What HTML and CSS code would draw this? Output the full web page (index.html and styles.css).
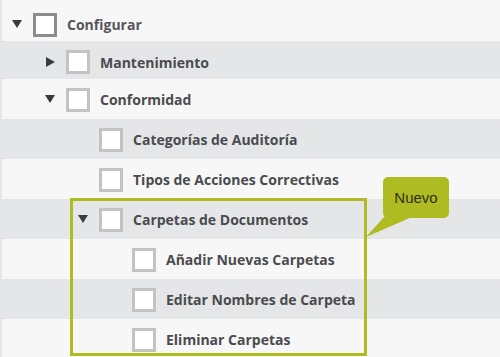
FILE: index.html
```html
<!DOCTYPE html>
<html lang="es">
<head>
    <meta charset="UTF-8">
    <title>Configurar</title>
    <link rel="stylesheet" href="styles.css">
</head>
<body>
    <ul class="tree">
        <li class="row light first">
            <span class="caret down"></span>
            <span class="check top"></span>
            <span class="label top">Configurar</span>
        </li>
        <li class="row grey second lvl-1">
            <span class="caret right"></span>
            <span class="check"></span>
            <span class="label">Mantenimiento</span>
        </li>
        <li class="row light lvl-1">
            <span class="caret down"></span>
            <span class="check"></span>
            <span class="label">Conformidad</span>
        </li>
        <li class="row grey lvl-2">
            <span class="caret none"></span>
            <span class="check"></span>
            <span class="label">Categorías de Auditoría</span>
        </li>
        <li class="row light lvl-2">
            <span class="caret none"></span>
            <span class="check"></span>
            <span class="label">Tipos de Acciones Correctivas</span>
        </li>
        <li class="group">
            <ul>
                <li class="row grey lvl-2">
                    <span class="caret down"></span>
                    <span class="check"></span>
                    <span class="label">Carpetas de Documentos</span>
                </li>
                <li class="row light lvl-3">
                    <span class="caret none"></span>
                    <span class="check"></span>
                    <span class="label">Añadir Nuevas Carpetas</span>
                </li>
                <li class="row grey lvl-3">
                    <span class="caret none"></span>
                    <span class="check"></span>
                    <span class="label">Editar Nombres de Carpeta</span>
                </li>
                <li class="row light lvl-3">
                    <span class="caret none"></span>
                    <span class="check"></span>
                    <span class="label">Eliminar Carpetas</span>
                </li>
            </ul>
            <div class="highlight"></div>
            <div class="callout">
                <span>Nuevo</span>
                <svg class="tail" width="50" height="22" viewBox="0 0 50 22">
                    <polygon points="18,0 46,0 0,20" fill="#afbc21"/>
                </svg>
            </div>
        </li>
    </ul>
</body>
</html>
```

FILE: styles.css
```css
* {
    margin: 0;
    padding: 0;
    box-sizing: border-box;
}

body {
    font-family: "Open Sans", "Liberation Sans", sans-serif;
    background: #e5e6e8;
    width: 500px;
    height: 357px;
    overflow: hidden;
}

.tree,
.tree ul {
    list-style: none;
}

.row {
    display: flex;
    align-items: center;
    height: 40px;
    padding-left: 12px;
    padding-top: 1px;
}

.row.light {
    background: #f7f7f7;
    margin-left: 2px;
    padding-left: 10px;
}

.row.grey {
    background: #e5e6e8;
}

.row.first {
    height: 41px;
    padding-top: 8px;
}

.row.second {
    height: 38px;
    padding-top: 4px;
}

.lvl-1 { padding-left: 45px; }
.lvl-2 { padding-left: 78px; }
.lvl-3 { padding-left: 111px; }

.row.light.lvl-1 { padding-left: 43px; }
.row.light.lvl-2 { padding-left: 76px; }
.row.light.lvl-3 { padding-left: 109px; }

.caret {
    width: 10px;
    height: 10px;
    margin-right: 11px;
    position: relative;
}

.caret.down::before,
.caret.right::before {
    content: "";
    position: absolute;
    border-style: solid;
}

.caret.down::before {
    top: 0;
    left: 0;
    border-width: 8px 5px 0 5px;
    border-color: #3a3b3d transparent transparent transparent;
}

.caret.right::before {
    top: 0;
    left: 1px;
    border-width: 5px 0 5px 9px;
    border-color: transparent transparent transparent #3a3b3d;
}

.check {
    width: 24px;
    height: 24px;
    border: 3px solid #c3c3c5;
    background: #fff;
    margin-right: 10px;
    flex-shrink: 0;
}

.check.top {
    border-color: #8d8d8f;
}

.label {
    font-size: 14px;
    font-weight: 700;
    color: #4a4b4e;
    white-space: nowrap;
}

.label.top {
    color: #555659;
}

.group {
    position: relative;
}

.highlight {
    position: absolute;
    left: 70px;
    top: -1px;
    width: 297px;
    height: 158px;
    border: 3px solid #afbc21;
}

.callout {
    position: absolute;
    left: 383px;
    top: -22px;
    width: 66px;
    height: 41px;
    background: #afbc21;
    border-radius: 5px;
    display: flex;
    align-items: center;
    justify-content: center;
}

.callout span {
    font-family: "Liberation Sans", Arial, sans-serif;
    font-size: 15px;
    color: #2e2f1a;
}

.tail {
    position: absolute;
    left: -17px;
    top: 40px;
}
```
